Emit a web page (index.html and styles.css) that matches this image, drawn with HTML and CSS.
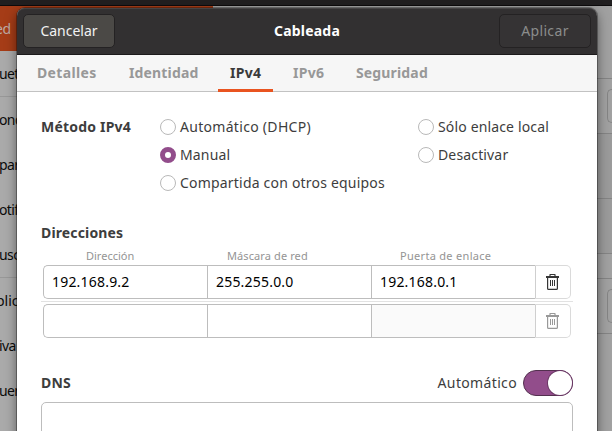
FILE: index.html
```
<!DOCTYPE html>
<html lang="es">
<head>
<meta charset="utf-8">
<title>Cableada</title>
<link rel="stylesheet" href="styles.css">
</head>
<body>
<svg class="defs" width="0" height="0" aria-hidden="true">
  <symbol id="trash" viewBox="0 0 14 16">
    <path d="M5 2.5V1q0-.5.5-.5h4q.5 0 .5.5v1.5" fill="none" stroke="currentColor" stroke-width="1.2"/>
    <path d="M1 3h13" fill="none" stroke="currentColor" stroke-width="2"/>
    <path d="M2.6 4v10.4q0 1 1 1h7.8q1 0 1-1V4" fill="none" stroke="currentColor" stroke-width="1.2"/>
    <path d="M5.5 6v6M7.5 6v6M9.5 6v6" fill="none" stroke="currentColor"/>
  </symbol>
</svg>
<div class="window">
  <div class="topbar"></div>
  <div class="app">
    <nav class="sidebar">
      <div class="sidebar-title">ed</div>
      <div class="item lined">uet</div>
      <div class="item">ond</div>
      <div class="item">par</div>
      <div class="item">otif</div>
      <div class="item lined">usc</div>
      <div class="item plic">plic</div>
      <div class="item">iva</div>
      <div class="item">uen</div>
    </nav>
    <div class="panel">
      <div class="gap-top"></div>
      <div class="cell"><i></i></div>
      <div class="cell empty"></div>
      <div class="gap-mid"></div>
      <div class="space"></div>
      <div class="cell"><i></i></div>
    </div>
  </div>
</div>
<div class="dialog">
  <header class="header">
    <button class="btn cancel">Cancelar</button>
    <h1>Cableada</h1>
    <button class="btn apply">Aplicar</button>
  </header>
  <nav class="tabs">
    <span class="tab detalles">Detalles</span>
    <span class="tab identidad">Identidad</span>
    <span class="tab active">IPv4</span>
    <span class="tab ipv6">IPv6</span>
    <span class="tab seguridad">Seguridad</span>
  </nav>
  <main class="content">
    <section class="method">
      <h2>Método IPv4</h2>
      <div class="options">
        <label class="dhcp"><i class="radio"></i>Automático (DHCP)</label>
        <label><i class="radio"></i>Sólo enlace local</label>
        <label><i class="radio on"></i>Manual</label>
        <label><i class="radio"></i>Desactivar</label>
        <label class="wide"><i class="radio"></i>Compartida con otros equipos</label>
      </div>
    </section>
    <h2 class="addr-title">Direcciones</h2>
    <div class="heads">
      <span class="h-dir">Dirección</span>
      <span class="h-mask">Máscara de red</span>
      <span class="h-gate">Puerta de enlace</span>
    </div>
    <div class="row">
      <div class="field">192.168.9.2</div>
      <div class="field">255.255.0.0</div>
      <div class="field">192.168.0.1</div>
      <div class="del"><svg width="14" height="16"><use href="#trash"/></svg></div>
    </div>
    <div class="sep"></div>
    <div class="row">
      <div class="field"></div>
      <div class="field"></div>
      <div class="field disabled"></div>
      <div class="del off"><svg width="14" height="16"><use href="#trash"/></svg></div>
    </div>
    <div class="dns">
      <h2>DNS</h2>
      <span class="auto">Automático</span>
      <i class="switch"></i>
    </div>
    <div class="dns-box"></div>
  </main>
</div>
</body>
</html>
```
FILE: styles.css
```
* { box-sizing: border-box; }
body {
  margin: 0;
  width: 612px;
  height: 431px;
  overflow: hidden;
  position: relative;
  font: 14px/20px "Noto Sans", sans-serif;
  letter-spacing: .15px;
  color: #3d3d3d;
}
.defs { position: absolute; }
h1, h2 { margin: 0; font-size: 14px; line-height: 20px; font-weight: 700; }

.window { height: 431px; background: #a1a1a1; }
.topbar { height: 6px; background: #211f20; border-bottom: 1px solid #0d0b0c; }
.app { display: flex; justify-content: space-between; height: 425px; }
.sidebar { width: 213px; color: #0b0b0b; background: #aaa; }
.sidebar-title { height: 45px; line-height: 45px; background: #a53c17; color: #bdaaa3; text-indent: -5px; letter-spacing: -.5px; }
.item { height: 45px; line-height: 45px; text-indent: -1px; letter-spacing: -.6px; }
.lined { height: 46px; border-bottom: 1px solid #989898; }
.plic { text-indent: -4px; letter-spacing: 0; }
.panel { width: 15px; background: #a1a1a1; }
.gap-top { height: 73px; border-bottom: 1px solid #858585; }
.cell { height: 55px; border-bottom: 1px solid #858585; padding: 10px 0 0 10px; }
.cell i { display: block; height: 34px; border: 1px solid #858585; border-right: 0; border-radius: 5px 0 0 5px; }
.empty { height: 65px; background: #9b9b9b; }
.gap-mid { height: 55px; border-bottom: 1px solid #858585; background: #9b9b9b; }
.space { height: 25px; border-bottom: 1px solid #858585; }

.dialog {
  position: absolute;
  left: 17px;
  top: 8px;
  width: 580px;
  height: 440px;
  background: #fff;
  border-radius: 8px 8px 0 0;
  box-shadow: 0 0 0 1px rgba(0,0,0,.3), 0 4px 12px rgba(0,0,0,.5);
}
.header {
  display: flex;
  align-items: center;
  justify-content: space-between;
  height: 47px;
  padding: 0 6px;
  background: #323031;
  border-bottom: 1px solid #1c1a1b;
  border-radius: 8px 8px 0 0;
  box-shadow: inset 0 1px #454344;
}
.header h1 { color: #fff; letter-spacing: .2px; }
.btn {
  height: 34px;
  padding: 0;
  font: inherit;
  border: 1px solid #242223;
  border-radius: 5px;
}
.cancel { width: 92px; background: #4b4946; color: #f2f2f2; letter-spacing: 0; }
.apply { width: 92px; background: #353334; color: #8b8d8c; letter-spacing: .35px; }
.tabs {
  display: flex;
  height: 37px;
  padding-left: 8px;
  background: #f6f6f6;
  border-bottom: 1px solid #c2c2c2;
  font-weight: 700;
  color: #989898;
}
.tab { height: 37px; padding: 8px 0 0 12px; }
.detalles { width: 92px; letter-spacing: .35px; }
.identidad { width: 101px; }
.tab.active { width: 55px; color: #3a3a3a; border-bottom: 3px solid #e95420; letter-spacing: .3px; }
.ipv6 { width: 71px; padding-left: 20px; letter-spacing: .3px; }
.seguridad { padding-left: 12px; }

.content { padding: 22px 24px 0; }
.method { display: flex; height: 106px; padding-top: 3px; }
.method h2 { width: 119px; letter-spacing: .2px; }
.options { display: grid; grid-template-columns: 258px 150px; grid-auto-rows: 28px; }
.options label { display: flex; align-items: center; gap: 4px; height: 20px; }
.options .dhcp { letter-spacing: .3px; }
.wide { white-space: nowrap; letter-spacing: .2px; }
.radio { flex: none; width: 16px; height: 16px; border: 1px solid #b9b9b9; border-radius: 50%; background: #fff; }
.radio.on { border: 5px solid #924d8b; }
.addr-title { margin-top: 3px; }
.heads { display: flex; height: 22px; font-size: 11px; line-height: 26px; color: #949494; letter-spacing: .1px; }
.heads span { white-space: nowrap; }
.h-dir { width: 141px; padding-left: 45px; letter-spacing: 0; }
.h-mask { width: 173px; padding-left: 45px; }
.h-gate { padding-left: 45px; letter-spacing: .3px; }
.row { display: grid; grid-template-columns: 164px 164px 164px 36px; height: 34px; margin: 0 2px; }
.field { border: 1px solid #bdbdbd; border-right: 0; padding: 6px 8px; color: #000; letter-spacing: .2px; }
.field:first-child { border-radius: 5px 0 0 5px; }
.disabled { background: #fafafa; }
.del {
  display: flex;
  align-items: center;
  justify-content: center;
  border: 1px solid #dadada;
  border-left-color: #cfcfcf;
  border-radius: 0 5px 5px 0;
  color: #363636;
  padding-right: 2px;
}
.del.off { color: #999; }
.sep { height: 1px; margin: 2px 0; background: #e2e2e2; }
.dns { display: flex; align-items: center; height: 26px; margin-top: 32px; }
.auto { margin-left: auto; margin-right: 6px; letter-spacing: .35px; }
.switch { width: 50px; height: 26px; border: 1px solid #53304f; border-radius: 13px; background: #924d8b; display: flex; justify-content: flex-end; }
.switch::after { content: ""; width: 24px; height: 24px; border-radius: 50%; background: #fff; box-shadow: 0 0 0 1px #6c3966; }
.dns-box { height: 50px; margin-top: 6px; border: 1px solid #bdbdbd; border-radius: 5px; }
```
